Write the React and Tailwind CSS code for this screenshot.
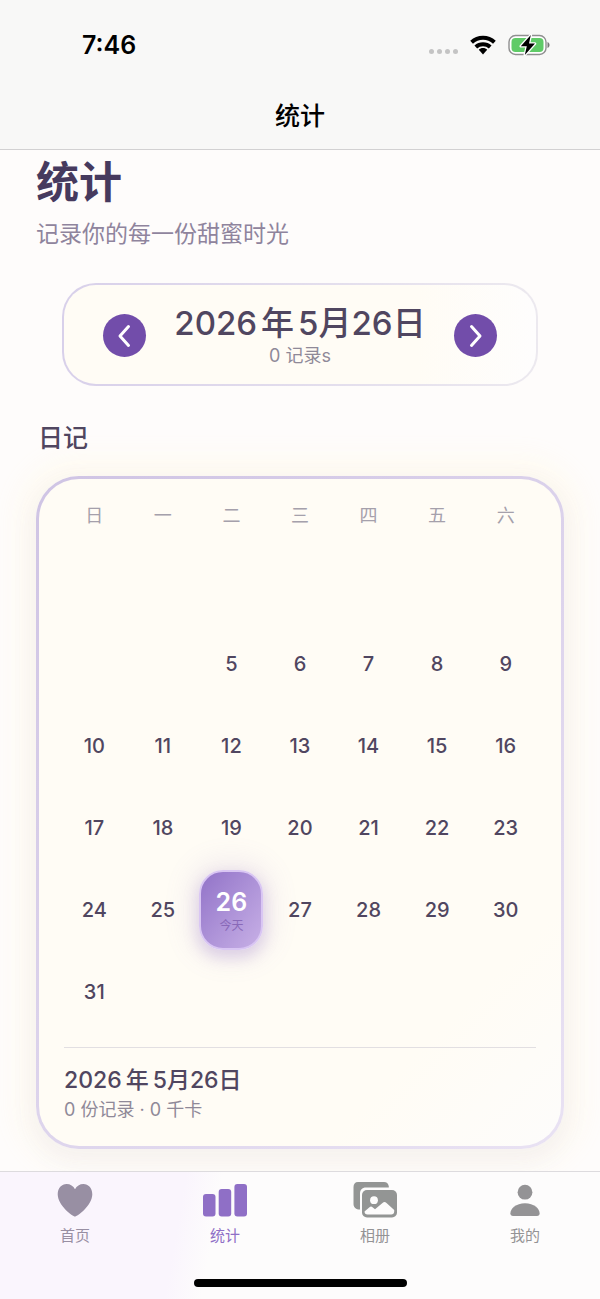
import React, { useState } from 'react';

const weekdays = ['日', '一', '二', '三', '四', '五', '六'];

// Day numbers by week, null for an empty cell
const weeks = [
  [null, null, null, null, null, null, null],
  [null, null, 5, 6, 7, 8, 9],
  [10, 11, 12, 13, 14, 15, 16],
  [17, 18, 19, 20, 21, 22, 23],
  [24, 25, 26, 27, 28, 29, 30],
  [31, null, null, null, null, null, null],
];

const TODAY = 26;

const WifiIcon = () => (
  <svg viewBox="0 0 26 20" className="w-[26px] h-5" fill="none" stroke="#000" strokeWidth="4">
    <path d="M1.600 7.200C8 1.200 18 1.200 24.400 7.200" />
    <path d="M5.800 12c4-3.700 10.400-3.700 14.400 0" />
    <path d="M13 13c-1.700 0-3.200.6-4.200 1.700L13 19.400l4.200-4.700c-1-1.100-2.500-1.700-4.200-1.700z" fill="#000" stroke="none" />
  </svg>
);

const BatteryIcon = () => (
  <svg viewBox="0 0 42 22" className="w-[42px] h-[22px]">
    <rect x="1" y="1.500" width="37" height="19" rx="6.500" fill="#fff" stroke="#8f8f8f" strokeWidth="1.400" />
    <rect x="3.500" y="4" width="32" height="14" rx="4" fill="#5fcb67" />
    <path d="M39.500 8v6c1.300-.5 2-1.700 2-3s-.7-2.500-2-3z" fill="#777" />
    <path
      d="M22.800 1 12.800 12.200h6L16.800 21 27 9.600h-6z"
      fill="#000"
      stroke="#fff"
      strokeWidth="2.600"
      strokeLinejoin="round"
      paintOrder="stroke"
    />
  </svg>
);

const HeartIcon = () => (
  <svg viewBox="0 0 36 34" className="w-9 h-[34px]" fill="#988fa3">
    <path d="M18 33.500C16 33.500.7 22.500.7 11.200.7 5.200 4.600 1 9.600 1c3.700 0 6.700 2 8.400 5.200C19.700 3 22.700 1 26.400 1c5 0 8.900 4.200 8.900 10.200C35.300 22.500 20 33.500 18 33.500z" />
  </svg>
);

const BarsIcon = () => (
  <svg viewBox="0 0 46 34" className="w-[46px] h-[34px]" fill="#8f6fc6">
    <rect x="1" y="11" width="12.500" height="22.500" rx="3" />
    <rect x="16.700" y="6" width="12.500" height="27.500" rx="3" />
    <rect x="32.400" y="1" width="12.600" height="32.500" rx="3" />
  </svg>
);

const PhotosIcon = () => (
  <svg viewBox="0 0 44 36" className="w-11 h-9">
    <path d="M5 0h26c2.600 0 4.400 1.500 4.800 4.300V5.500H13C9 5.500 7 8 7 11.500V27.500C3 27.500.5 25.500.5 22V5C.5 2 2 0 5 0z" fill="#939594" />
    <rect x="9" y="8" width="35" height="27.500" rx="5" fill="#939594" />
    <circle cx="21" cy="18.200" r="3.900" fill="#fdfcfc" />
    <path d="M11.500 29.500l5-4.300c1-.8 2-.8 3 0l2.500 2 7.500-6.300c1.400-1.100 2.600-1.100 4 0l7.700 7v1.600c0 1.800-1.200 3-3 3H14.500c-1.800 0-3-1.200-3-3z" fill="#fdfcfc" />
  </svg>
);

const PersonIcon = () => (
  <svg viewBox="0 0 30 34" className="w-[30px] h-[34px]" fill="#949395">
    <circle cx="15" cy="9.200" r="7.400" />
    <path d="M3 33C1.300 33 .4 32 .4 30.300.4 25.500 6 20.200 15 20.200s14.600 5.300 14.600 10.100c0 1.700-.9 2.700-2.600 2.700z" />
  </svg>
);

const tabs = [
  { name: '首页', icon: HeartIcon, color: 'text-[#988fa3]' },
  { name: '统计', icon: BarsIcon, color: 'text-[#8f6fc6]' },
  { name: '相册', icon: PhotosIcon, color: 'text-[#949395]' },
  { name: '我的', icon: PersonIcon, color: 'text-[#949395]' },
];

const ArrowButton = ({ label, path, onClick }) => (
  <button
    type="button"
    aria-label={label}
    onClick={onClick}
    className="flex size-[43px] shrink-0 items-center justify-center rounded-full bg-[#724daa]"
  >
    <svg viewBox="0 0 24 24" className="size-6" fill="none" stroke="#fff" strokeWidth="3" strokeLinecap="round" strokeLinejoin="round">
      <path d={path} />
    </svg>
  </button>
);

const DateTitle = ({ day }) => (
  <>
    2026<span className="mx-1">年</span>5月{day}日
  </>
);

const Header = () => (
  <header className="h-[150px] border-b border-[#d2d1d2] bg-[#f8f8f7] text-black">
    <div className="flex h-[90px] items-center justify-between pl-[82px] pr-[50px]">
      <span className="text-[25px] leading-8 font-semibold">7:46</span>
      <div className="flex items-center gap-3">
        <div className="flex gap-[3px] pt-3">
          {[0, 1, 2, 3].map((dot) => (
            <span key={dot} className="size-[5px] rounded-full bg-[#c4c4c4]" />
          ))}
        </div>
        <WifiIcon />
        <BatteryIcon />
      </div>
    </div>
    <p className="pt-2.5 text-center text-[25px] leading-8 font-medium">统计</p>
  </header>
);

const Calendar = ({ day, setDay }) => (
  <table className="w-full table-fixed text-center">
    <thead>
      <tr>
        {weekdays.map((name) => (
          <th key={name} scope="col" className="p-0 pb-[13px] text-[18px] leading-6 font-normal text-[#a5a0ab]">
            {name}
          </th>
        ))}
      </tr>
    </thead>
    <tbody>
      {weeks.map((week, i) => (
        <tr key={i}>
          {week.map((date, j) => (
            <td key={j} className="h-[82px] p-0">
              {date && date !== day && (
                <button type="button" onClick={() => setDay(date)} className="h-16 w-full text-xl font-medium text-[#504660]">
                  {date}
                </button>
              )}
              {date && date === day && (
                <button
                  type="button"
                  aria-pressed="true"
                  className="mx-auto flex h-20 w-16 flex-col items-center justify-center rounded-3xl border-2 border-[#d9c6f3] bg-linear-to-br from-[#9273c8] to-[#c8b0e6] shadow-[0_6px_14px_2px_rgba(146,115,200,0.25),0_0_24px_12px_rgba(146,115,200,0.1)]"
                >
                  <span className="text-[25px] leading-8 font-semibold text-white">{date}</span>
                  {date === TODAY && <span className="text-xs leading-4 text-[#8969b8]">今天</span>}
                </button>
              )}
            </td>
          ))}
        </tr>
      ))}
    </tbody>
  </table>
);

const TabBar = () => (
  <nav className="border-t border-[#dddbde] bg-[linear-gradient(100deg,#faf5fd_30%,#fdfcfc_36%)]">
    <div className="grid grid-cols-4 pt-2.5">
      {tabs.map(({ name, icon: Icon, color }) => (
        <a key={name} href="#" className={`flex flex-col items-center gap-1.5 ${color}`}>
          <span className="flex h-9 items-center">
            <Icon />
          </span>
          <span className="text-[15px] leading-6">{name}</span>
        </a>
      ))}
    </div>
    <div className="mx-auto mt-[31px] mb-3 h-2 w-[213px] rounded-full bg-black" />
  </nav>
);

const App = () => {
  // Selected day of the month
  const [day, setDay] = useState(TODAY);

  return (
    <div className="flex min-h-screen flex-col bg-[#fefcfb] font-['Inter','Noto_Sans_CJK_SC',sans-serif] text-[#504660]" lang="zh-CN">
      <Header />

      <main className="flex-1 overflow-hidden px-9 pt-2 pb-[21px]">
        <h1 className="text-[43px] leading-[48px] font-bold text-[#463a5e]">统计</h1>
        <p className="mt-3 text-[23px] leading-8 text-[#8f849d]">记录你的每一份甜蜜时光</p>

        {/* Date switcher */}
        <section className="mx-[26px] mt-[33px] flex items-center justify-between rounded-[34px] border-2 border-transparent px-[39px] pt-[18px] pb-4 [background:linear-gradient(to_right,#fffcf5_75%,#fefdfd)_padding-box,linear-gradient(to_right,#d8d0ea,#ece9ef)_border-box]">
          <ArrowButton label="前一天" path="M15.500 2.500 7 12l8.500 9.500" onClick={() => setDay(Math.max(5, day - 1))} />
          <div className="text-center">
            <p className="text-[33px] leading-10 font-medium whitespace-nowrap">
              <DateTitle day={day} />
            </p>
            <p className="mt-px text-[18px] leading-6 text-[#8f8998]">0 记录s</p>
          </div>
          <ArrowButton label="后一天" path="M8.500 2.500 17 12l-8.500 9.500" onClick={() => setDay(Math.min(31, day + 1))} />
        </section>

        <h2 className="mt-9 pl-0.5 text-[25px] leading-8 font-medium">日记</h2>

        {/* Month card */}
        <section className="mt-[22px] rounded-[43px] border-3 border-transparent px-[21px] pt-[25px] pb-[22px] shadow-[0_8px_20px_6px_rgba(110,110,220,0.06),0_0_24px_18px_rgba(255,251,240,0.9)] [background:linear-gradient(135deg,#fffcf5_80%,#fdfcfb)_padding-box,linear-gradient(135deg,#cfc4e4,#e9e2f3)_border-box]">
          <Calendar day={day} setDay={setDay} />
          <div className="mx-1 mt-3.5 border-t border-[#e2dfe2] pt-4">
            <p className="text-[23px] leading-8 font-medium">
              <DateTitle day={day} />
            </p>
            <p className="text-[18px] leading-7 text-[#8f8998]">0 份记录 · 0 千卡</p>
          </div>
        </section>
      </main>

      <TabBar />
    </div>
  );
};

export default App;
